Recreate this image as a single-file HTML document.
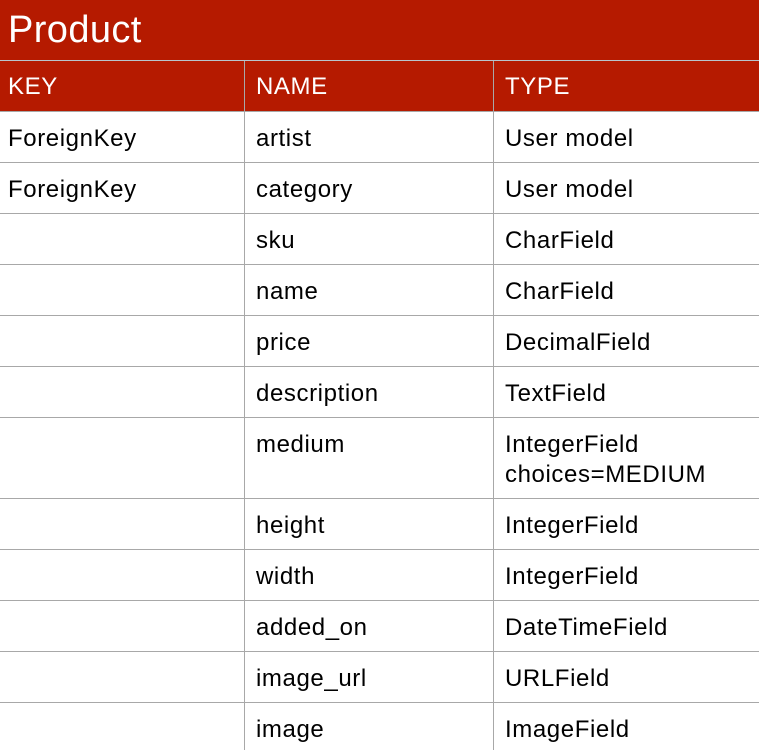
<!DOCTYPE html><html><head><style>
body{margin:0;width:759px;height:750px;overflow:hidden;background:#fff;font-family:"Liberation Sans",Arial,sans-serif;}
.t{position:absolute;left:0;top:0;width:759px;height:60px;background:#b51a00;color:#fff;font-size:38px;line-height:60px;padding-left:8px;box-sizing:border-box;letter-spacing:0.4px}
.h{position:absolute;top:61px;height:50px;background:#b51a00}
.c{position:absolute;font-size:24px;color:#000;line-height:30px;letter-spacing:0.6px}
.hc{font-size:24px;color:#fff}
.hl{position:absolute;left:0;width:759px;height:1px;background:#a8a8a8}
.vl{position:absolute;width:1px;background:#a8a8a8}
</style></head><body>
<div class="t">Product</div>
<div class="hl" style="top:60px;background:#b8c4cc"></div>
<div class="h" style="left:0;width:759px"></div>
<div class="c hc" style="left:8px;top:72px">KEY</div>
<div class="c hc" style="left:256px;top:72px">NAME</div>
<div class="c hc" style="left:505px;top:72px">TYPE</div>
<div class="vl" style="left:244px;top:61px;height:689px"></div>
<div class="vl" style="left:493px;top:61px;height:689px"></div>
<div class="hl" style="top:111px"></div>
<div class="hl" style="top:162px"></div>
<div class="hl" style="top:213px"></div>
<div class="hl" style="top:264px"></div>
<div class="hl" style="top:315px"></div>
<div class="hl" style="top:366px"></div>
<div class="hl" style="top:417px"></div>
<div class="hl" style="top:498px"></div>
<div class="hl" style="top:549px"></div>
<div class="hl" style="top:600px"></div>
<div class="hl" style="top:651px"></div>
<div class="hl" style="top:702px"></div>
<div class="c" style="left:8px;top:124px">ForeignKey</div><div class="c" style="left:256px;top:124px">artist</div><div class="c" style="left:505px;top:124px">User model</div>
<div class="c" style="left:8px;top:175px">ForeignKey</div><div class="c" style="left:256px;top:175px">category</div><div class="c" style="left:505px;top:175px">User model</div>
<div class="c" style="left:256px;top:226px">sku</div><div class="c" style="left:505px;top:226px">CharField</div>
<div class="c" style="left:256px;top:277px">name</div><div class="c" style="left:505px;top:277px">CharField</div>
<div class="c" style="left:256px;top:328px">price</div><div class="c" style="left:505px;top:328px">DecimalField</div>
<div class="c" style="left:256px;top:379px">description</div><div class="c" style="left:505px;top:379px">TextField</div>
<div class="c" style="left:256px;top:430px">medium</div><div class="c" style="left:505px;top:430px">IntegerField<br>choices=MEDIUM</div>
<div class="c" style="left:256px;top:511px">height</div><div class="c" style="left:505px;top:511px">IntegerField</div>
<div class="c" style="left:256px;top:562px">width</div><div class="c" style="left:505px;top:562px">IntegerField</div>
<div class="c" style="left:256px;top:613px">added_on</div><div class="c" style="left:505px;top:613px">DateTimeField</div>
<div class="c" style="left:256px;top:664px">image_url</div><div class="c" style="left:505px;top:664px">URLField</div>
<div class="c" style="left:256px;top:715px">image</div><div class="c" style="left:505px;top:715px">ImageField</div>
</body></html>
